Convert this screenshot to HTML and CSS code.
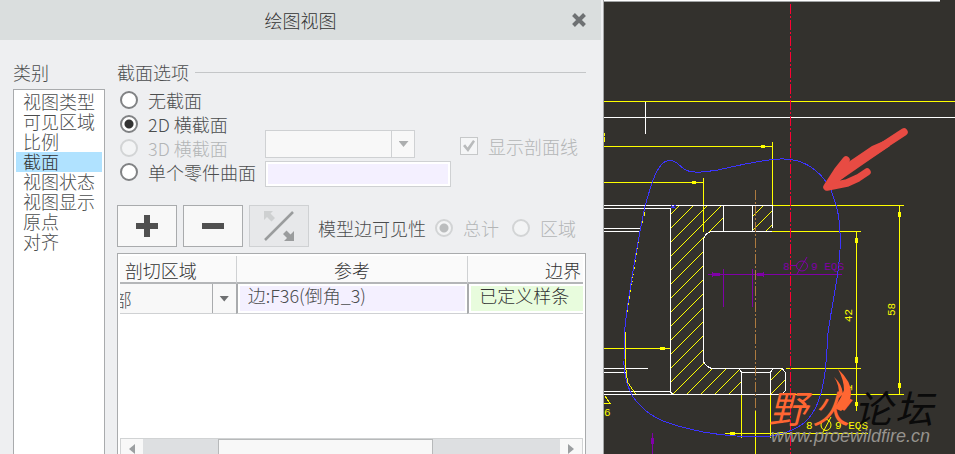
FILE: index.html
```html
<!DOCTYPE html>
<html lang="zh-CN">
<head>
<meta charset="utf-8">
<title>绘图视图</title>
<link rel="stylesheet" href="styles.css">
</head>
<body>
<main class="workspace">
  <section class="dialog">
    <header class="titlebar">
      <h1 class="title">绘图视图</h1>
      <button class="close" type="button" aria-label="关闭">
        <svg width="16" height="16" viewBox="0 0 16 16"><path d="M2.500 2.500l11 11M13.500 2.500l-11 11" stroke="#6e7173" stroke-width="4"/></svg>
      </button>
    </header>
    <div class="content">
      <nav class="categories">
        <h2 class="heading">类别</h2>
        <ul class="list">
          <li><button type="button" class="item">视图类型</button></li>
          <li><button type="button" class="item">可见区域</button></li>
          <li><button type="button" class="item">比例</button></li>
          <li><button type="button" class="item selected">截面</button></li>
          <li><button type="button" class="item">视图状态</button></li>
          <li><button type="button" class="item">视图显示</button></li>
          <li><button type="button" class="item">原点</button></li>
          <li><button type="button" class="item">对齐</button></li>
        </ul>
      </nav>
      <div class="panel">
        <h2 class="heading ruled">截面选项</h2>
        <div class="options">
          <div class="choices">
            <label class="choice"><input type="radio" name="section">无截面</label>
            <label class="choice"><input type="radio" name="section" checked>2D 横截面</label>
            <label class="choice disabled"><input type="radio" name="section" disabled>3D 横截面</label>
            <label class="choice"><input type="radio" name="section">单个零件曲面</label>
          </div>
          <div class="fields">
            <div class="combo">
              <select class="combo-select" disabled aria-label="3D 横截面"><option></option></select>
              <span class="combo-arrow"></span>
            </div>
            <input class="surface" type="text" aria-label="单个零件曲面">
          </div>
          <label class="choice disabled hatch-choice"><input type="checkbox" checked disabled>显示剖面线</label>
        </div>
        <div class="toolbar">
          <button class="tool" type="button" aria-label="添加">
            <svg width="24" height="24" viewBox="0 0 24 24"><path d="M1 12h22M12 1v22" stroke="#505050" stroke-width="6"/></svg>
          </button>
          <button class="tool" type="button" aria-label="移除">
            <svg width="24" height="24" viewBox="0 0 24 24"><path d="M1 12h22" stroke="#505050" stroke-width="6"/></svg>
          </button>
          <button class="tool" type="button" aria-label="反向" disabled>
            <svg width="30" height="30" viewBox="0 0 30 30"><path d="M0 0h9L6.500 2.500l4.500 4.500-3.500 3.500-4.500-4.500L0 9z" fill="#ced0d1"/><path d="M1 29L29 1" stroke="#9a9c9d" stroke-width="2.500"/><path d="M30 30H20l3-3-4-4 3.500-3.500 4 4 3.500-3.500z" fill="#9a9c9d"/></svg>
          </button>
          <div class="visibility">
            <span>模型边可见性</span>
            <label class="choice disabled"><input type="radio" name="edges" checked disabled>总计</label>
            <label class="choice disabled"><input type="radio" name="edges" disabled>区域</label>
          </div>
        </div>
        <div class="grid-box">
          <table class="regions">
            <thead>
              <tr><th class="col-area">剖切区域</th><th class="col-ref">参考</th><th class="col-edge">边界</th></tr>
            </thead>
            <tbody>
              <tr>
                <td><div class="area"><span class="area-text">部</span><button class="area-open" type="button" aria-label="展开"></button></div></td>
                <td><div class="cell reference">边:F36(倒角_3)</div></td>
                <td><div class="cell boundary">已定义样条</div></td>
              </tr>
            </tbody>
          </table>
          <div class="scrollbar">
            <button class="step" type="button" aria-label="向左"><svg width="6" height="10" viewBox="0 0 6 10"><path d="M6 0v10L0 5z" fill="#9c9fa1"/></svg></button>
            <div class="track"><div class="thumb"></div></div>
            <button class="step" type="button" aria-label="向右"><svg width="6" height="10" viewBox="0 0 6 10"><path d="M0 0v10l6-5z" fill="#9c9fa1"/></svg></button>
          </div>
        </div>
      </div>
    </div>
  </section>
  <section class="canvas">
    <svg class="drawing" viewBox="604 0 351 454" preserveAspectRatio="xMinYMin slice">
      <defs>
        <pattern id="hatch" patternUnits="userSpaceOnUse" x="3" width="14" height="14">
          <path d="M0 14L14 0M-1 1L1-1M13 15L15 13" stroke="#ff0" fill="none"/>
        </pattern>
      </defs>
      <path d="M604 0h336v1H604z" fill="#fff"/><path d="M604 1h336v1H604z" fill="#a2a4a5"/>
      <g shape-rendering="crispEdges" fill="none">
        <path fill="url(#hatch)" d="M671 205h52v26h-11l-9 9v122l9 6h26l3 4v22h-70zM752 205h20v26h-20zM774 368h8l4 5v17l-4 4h-12v-22z"/>
        <path stroke="#ff0" d="M604 101.500h351M604 146.500h168M604 182.500h99M604 348.500h66M772.500 142v63M703.500 178v54M772 205.500h132M772 231.500h89M786 368.500h75M786 394.500h118M899.500 205v189M856.500 231v180M741.500 395v43M770.500 395v43M755.500 411v43M725 433.500h143M605 396l5 7.500h-6M604.500 133v3M604.500 137v5"/>
        <path fill="#ff0" d="M761 145h4v3h-4zM692 181h4v3h-4zM660 347h5v3h-5zM730 432h5v3h-5zM898 212h3v5h-3zM898 383h3v5h-3zM855 238h3v5h-3zM855 357h3v6h-3zM855 402h3v4h-3zM779 432h4v3h-4z"/>
        <path stroke="#fff" d="M604 117.500h351M645.500 102v32M604 205.500h168M604 208.500h67M604 228.500h36M604 231.500h36M670.500 208v183M723.500 205v26M752.500 205v26M772.500 205v23M712 231.500h60M712 231.500q-7 1-8.500 8.500M703.500 240v122M703.500 362q4 6 9 6.500M712 368.500h70l3.500 4v18l-3.500 4H604M604 391.500h66l3 3M604 368.500h44M604 372.500h22M741.500 394v-22h29v22M738 368l3.500 4M774 368l-3.500 4"/>
        <path stroke="#8000a8" d="M708 274.500h134M723.500 269v38M752.500 269v38M652.500 433v21M763 272v5M712 272v5"/>
        <path fill="#8000a8" d="M713 273h7v3h-7zM757 273h6v3h-6zM651 438h3v6h-3z"/>
        <path stroke="#ad7a3f" stroke-dasharray="10 2 2 2" d="M755.500 190v221"/>
        <path stroke="#ff0033" stroke-dasharray="10 2 2 2" d="M790.500 4v450"/>
        <path stroke="#ff0" stroke-dasharray="4 3" d="M645 212L640 230 635 262 627 315"/>
        <path stroke="#ff0" d="M625.500 332v34l2 16 8 12"/>
        <path stroke="#3c34ff" d="M668.500 160.500C656 162 650 190 645 206C639 235 636 250 630 290C624 328 624 333 624 365C625 380 630 397 640 405C652 419 670 425 703 432C725 436 755 438 771 436C792 432 807 426 816 407C824 390 826 370 828 333C832 303 839 276 840 250C841 220 838 209 831 190C819 167 800 158 780 159C760 160 740 165 718 170C704 172 691 174 684 169C678 164 675 160 668.500 160.500M671 205l5 4M671 208l5-3"/>
      </g>
      <g class="dimension">
        <text x="783" y="270" class="violet">8</text><text x="811" y="270" class="violet">9 EQS</text>
        <text x="806" y="429">8</text><text x="835" y="429">9 EQS</text>
        <text x="604" y="416">6</text>
        <text transform="translate(852 322) rotate(-90)">42</text>
        <text transform="translate(895 316) rotate(-90)">58</text>
        <text transform="translate(852 391) rotate(-90)">1</text>
      </g>
      <g fill="none">
        <path stroke="#8000a8" d="M790 265.500h6M797 274l10-17"/><ellipse cx="802" cy="266" rx="5.500" ry="5" stroke="#8000a8"/>
        <path stroke="#ff0" d="M816 433.500h4M822 434l9-17"/><ellipse cx="826" cy="425" rx="5" ry="5.500" stroke="#ff0"/>
      </g>
      <path fill="none" stroke="#e84b43" stroke-linecap="round" stroke-linejoin="round" stroke-width="7.500" d="M904 132L878 149 850 167 828 186M846 160L838 170 827 187 847 183 858 178 867 172"/>
      <path fill="#e84b43" d="M844 165l28-19 14-6 4 6-22 15-26 18-15 8z"/>
      <g class="watermark">
        <text x="769" y="423" class="fire">野</text><text x="812" y="423" class="fire">火</text>
        <text x="854" y="423">论</text><text x="895" y="423">坛</text>
      </g>
      <path fill="#ff6632" d="M838 369Q852 382 851 394 850 405 841 411L834 408Q841 399 844 390 844 380 838 369zM834 377Q842 384 843 394L839 398Q840 385 834 377z"/>
      <text x="771" y="442" class="site">www.proewildfire.cn</text>
    </svg>
  </section>
</main>
</body>
</html>
```
FILE: styles.css
```css
* { box-sizing: border-box; }

body {
  margin: 0;
  overflow: hidden;
  background: #33312d;
  color: #4b4d4e;
  font: 300 18px/20px "Noto Sans CJK SC", sans-serif;
}

button, input, select { margin: 0; padding: 0; color: inherit; font: inherit; }

.workspace {
  display: grid;
  grid-template-columns: minmax(0, 604fr) minmax(0, 351fr);
  height: 100vh;
}

.dialog {
  display: flex;
  flex-direction: column;
  min-height: 0;
  border-right: 1px solid #a5a7a8;
  background: #eeeff1;
}

.titlebar {
  display: grid;
  grid-template-columns: 44px 1fr 44px;
  align-items: center;
  height: 40px;
  margin-right: 2px;
  background: #dadede;
}

.title { grid-column: 2; margin: 0; color: #333; font: inherit; text-align: center; }

.close { display: grid; place-items: center; height: 40px; border: 0; background: none; }

.content {
  display: flex;
  flex: 1;
  gap: 12px;
  min-height: 0;
  padding: 20px 17px 0 13px;
}

.categories { display: flex; flex-direction: column; gap: 4px; width: 92px; }

.heading { margin: 0; font: inherit; line-height: 25px; white-space: nowrap; }

.ruled { display: flex; align-items: center; gap: 6px; }
.ruled::after { flex: 1; height: 1px; background: #c4c6c8; content: ""; }

.list {
  flex: 1;
  margin: 0;
  padding: 2px;
  border: 1px solid #a9abad;
  border-bottom: 0;
  background: #fff;
  list-style: none;
}

.item {
  display: block;
  width: 100%;
  height: 20px;
  padding-left: 7px;
  border: 0;
  background: none;
  line-height: 18px;
  text-align: left;
  white-space: nowrap;
}

.item { padding-bottom: 2px; }

.selected { background: #b0e2ff; color: #333; }

.panel { display: flex; flex: 1; flex-direction: column; min-width: 0; }

.options {
  display: grid;
  grid-template-columns: 148px 186px 1fr;
  align-items: start;
  padding-top: 3px;
}

.choices { padding-left: 3px; }

.choice { display: flex; align-items: center; gap: 10px; height: 24px; white-space: nowrap; }

.disabled { color: #b3b5b6; }

input[type="radio"], input[type="checkbox"] {
  width: 18px;
  height: 18px;
  border: 2px solid #808284;
  background: #fff;
  appearance: none;
}

input[type="radio"] { border-radius: 50%; }
input[type="radio"]:checked { background: radial-gradient(circle, #333 4px, #fff 5px); }
input[type="radio"]:disabled { border-color: #d2d4d5; background: #f3f4f5; }
input[type="radio"]:disabled:checked { background: radial-gradient(circle, #bbbdbe 4px, #f3f4f5 5px); }

input[type="checkbox"] { display: grid; place-items: center; border: 1px solid #c6c8c9; background: #f5f6f7; }
input[type="checkbox"]::before {
  width: 12px;
  height: 12px;
  background: #b9bbbc;
  clip-path: polygon(0 50%, 18% 36%, 38% 62%, 84% 0, 100% 12%, 42% 100%);
  content: "";
}

.fields { display: flex; flex-direction: column; gap: 3px; padding-top: 42px; }

.combo { display: grid; width: 150px; }

.combo-select, .combo-arrow { grid-area: 1 / 1; height: 28px; }

.combo-select { border: 1px solid #cfd1d3; border-radius: 0; background: #f8f8f8; opacity: 1; appearance: none; }

.combo-arrow {
  display: grid;
  place-items: center;
  justify-self: end;
  width: 24px;
  border-left: 1px solid #cfd1d3;
  pointer-events: none;
}

.combo-arrow::after, .area-open::after {
  width: 10px;
  height: 6px;
  background: #acaeaf;
  clip-path: polygon(0 0, 100% 0, 50% 100%);
  content: "";
}

.surface {
  width: 100%;
  height: 26px;
  padding: 2px;
  border: 1px solid #cfd1d3;
  background: #f4f0ff;
  box-shadow: inset 0 0 0 2px #fff;
}

.hatch-choice { margin: 46px 0 0 9px; }

.toolbar { display: flex; align-items: center; gap: 6px; margin-top: 18px; }

.tool {
  display: grid;
  place-items: center;
  width: 60px;
  height: 42px;
  border: 1px solid #a9abad;
  background: #f8f8f8;
}

.tool:disabled { border-color: #cfd1d3; background: #e7e8ea; }

.visibility { display: flex; align-items: center; gap: 9px; margin: 4px 0 0 3px; white-space: nowrap; }
.visibility .choice + .choice { margin-left: 4px; }

.grid-box {
  display: flex;
  flex: 1;
  flex-direction: column;
  justify-content: space-between;
  margin-top: 6px;
  padding: 2px 2px 0;
  border: 1px solid #a9abad;
  border-bottom: 0;
  background: #fff;
}

.regions { width: 100%; border-collapse: separate; border-spacing: 0; table-layout: fixed; }

th {
  height: 28px;
  padding: 1px 0 0;
  border-bottom: 2px solid #b4b6b8;
  background: #fafafa;
  color: #333;
  font-weight: inherit;
  white-space: nowrap;
}

th + th { border-left: 1px solid #cfd1d3; }

.col-area { width: 25%; padding-right: 34px; }
.col-ref { width: 50%; }
.col-edge { padding-right: 2px; text-align: right; }

td { height: 30px; padding: 0; border-bottom: 1px solid #cfd1d3; }
td + td { border-left: 2px solid #a9abad; }

.area { display: flex; height: 29px; background: #f8f8f8; }

.area-text {
  display: flex;
  flex: 1;
  align-items: center;
  justify-content: flex-end;
  min-width: 0;
  padding-right: 80px;
  overflow: hidden;
  white-space: nowrap;
}

.area-open {
  display: grid;
  place-items: center;
  width: 24px;
  border: 0;
  border-left: 1px solid #a9abad;
  background: none;
}

.area-open::after { background: #6e7071; }

.cell { height: 25px; margin: 0 2px; padding-left: 8px; line-height: 18px; white-space: nowrap; }
.reference { background: #f4f0ff; }
.boundary { margin-right: 0; background: #e8fcdd; color: #333; }

.scrollbar {
  display: grid;
  grid-template-columns: 22px 1fr 22px;
  height: 16px;
  border: 1px solid #d1d3d4;
  border-bottom: 0;
  background: #f8f8f8;
}

.step { display: grid; place-items: end center; border: 0; background: none; }

.track { padding-left: 18%; background: #dddfe1; }

.thumb { width: 63%; height: 100%; border: 1px solid #b7b9ba; border-width: 1px 1px 0; background: #f8f8f8; }

.canvas { min-width: 0; overflow: hidden; background: #33312d; }

.drawing { display: block; width: 100%; height: 100%; }

.dimension { fill: #ff0; font: 11px "Liberation Mono", monospace; }
.violet { fill: #8000a8; }

.watermark { fill: #0a0a0a; font: italic 400 38px "Noto Sans CJK SC", sans-serif; }
.fire { fill: #ff6632; }

.site { fill: #96938e; font: italic 18px "Liberation Sans", sans-serif; }
```
